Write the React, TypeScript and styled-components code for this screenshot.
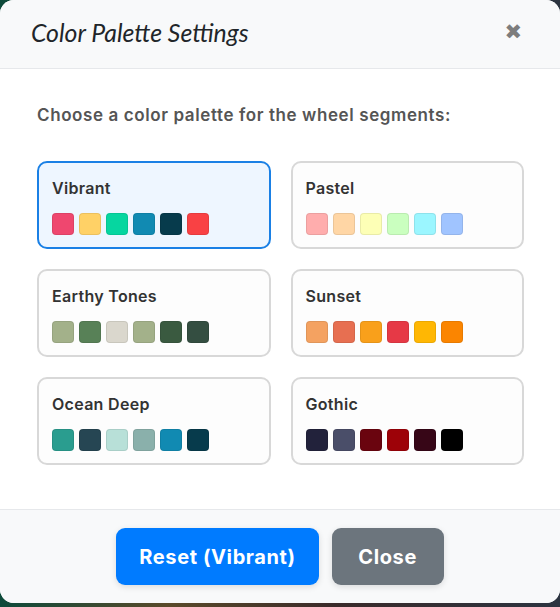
import React, { useState } from 'react';
import styled, { createGlobalStyle } from 'styled-components';

const GlobalStyle = createGlobalStyle`
  html, body {
    margin: 0;
    padding: 0;
    background: #20302c;
  }
  * {
    box-sizing: border-box;
  }
`;

const Page = styled.div`
  width: 560px;
  height: 607px;
  overflow: hidden;
  background: linear-gradient(90deg, #0d4a3a 0%, #5a4a2a 30%, #3a2a2a 60%, #2c3440 100%);
`;

const Modal = styled.div`
  width: 560px;
  height: 603px;
  background: #fff;
  border-radius: 14px;
  overflow: hidden;
  display: flex;
  flex-direction: column;
  font-family: Inter, 'Noto Sans', sans-serif;
`;

const Header = styled.div`
  height: 69px;
  flex-shrink: 0;
  background: #f8f9fa;
  border-bottom: 1px solid #e6e8eb;
  display: flex;
  align-items: center;
  justify-content: space-between;
  padding: 0 38px 4px 31px;
`;

const Title = styled.h2`
  margin: 0;
  font-family: Lato, 'Open Sans', sans-serif;
  font-style: italic;
  font-weight: 400;
  font-size: 24.8px;
  color: #212529;
`;

const CloseX = styled.button`
  border: none;
  background: none;
  padding: 0;
  font-family: 'DejaVu Sans', sans-serif;
  font-size: 21px;
  font-weight: 700;
  color: #7d7d7d;
  cursor: pointer;
  line-height: 1;
`;

const Body = styled.div`
  flex: 1;
  padding: 34px 36px 0 37px;
`;

const Intro = styled.p`
  margin: 0 0 34px;
  font-size: 17px;
  font-weight: 600;
  letter-spacing: 0.6px;
  color: #555;
  line-height: 24px;
`;

const Grid = styled.div`
  display: grid;
  grid-template-columns: 1fr 1fr;
  column-gap: 20px;
  row-gap: 20px;
`;

const Card = styled.div<{ $active?: boolean }>`
  height: 88px;
  border: 2px solid ${(p) => (p.$active ? '#1a80e5' : '#d8d8d8')};
  background: ${(p) => (p.$active ? '#eef6ff' : '#fdfdfd')};
  border-radius: 10px;
  padding: 14px 14px 0 13px;
  cursor: pointer;
`;

const CardName = styled.div`
  font-size: 16px;
  font-weight: 600;
  letter-spacing: 0.3px;
  color: #333;
  line-height: 22px;
  margin-bottom: 14px;
`;

const Swatches = styled.div`
  display: flex;
  gap: 5px;
`;

const Swatch = styled.span<{ $color: string }>`
  width: 22px;
  height: 22px;
  border-radius: 4px;
  background: ${(p) => p.$color};
  border: 1px solid rgba(0, 0, 0, 0.08);
`;

const Footer = styled.div`
  height: 94px;
  flex-shrink: 0;
  background: #f8f9fa;
  border-top: 1px solid #e6e8eb;
  display: flex;
  align-items: center;
  justify-content: center;
  gap: 13px;
`;

const Button = styled.button<{ $variant: 'primary' | 'secondary' }>`
  height: 57px;
  min-width: 112px;
  padding: 0 23px;
  border: none;
  border-radius: 9px;
  font-family: Inter, 'Noto Sans', sans-serif;
  font-size: 20px;
  font-weight: 700;
  letter-spacing: 0.6px;
  color: #fff;
  background: ${(p) => (p.$variant === 'primary' ? '#007bff' : '#6c757d')};
  box-shadow: 0 2px 6px rgba(0, 0, 0, 0.12);
  cursor: pointer;
`;

const palettes = [
  { name: 'Vibrant', colors: ['#ef476f', '#ffd166', '#06d6a0', '#118ab2', '#073b4c', '#f94144'] },
  { name: 'Pastel', colors: ['#ffadad', '#ffd6a5', '#fdffb6', '#caffbf', '#9bf6ff', '#a0c4ff'] },
  { name: 'Earthy Tones', colors: ['#a3b18a', '#588157', '#dad7cd', '#a3b18a', '#3a5a40', '#344e41'] },
  { name: 'Sunset', colors: ['#f4a261', '#e76f51', '#f9a01b', '#e63946', '#ffb703', '#fb8500'] },
  { name: 'Ocean Deep', colors: ['#2a9d8f', '#264653', '#b8e0d8', '#8ab0ab', '#118ab2', '#073b4c'] },
  { name: 'Gothic', colors: ['#22223b', '#4a4e69', '#6a040f', '#9d0208', '#370617', '#000000'] },
];

export default function App() {
  const [selected, setSelected] = useState('Vibrant');

  return (
    <>
      <GlobalStyle />
      <Page>
        <Modal>
          <Header>
            <Title>Color Palette Settings</Title>
            <CloseX aria-label="Close">✖</CloseX>
          </Header>
          <Body>
            <Intro>Choose a color palette for the wheel segments:</Intro>
            <Grid>
              {palettes.map((p) => (
                <Card key={p.name} $active={p.name === selected} onClick={() => setSelected(p.name)}>
                  <CardName>{p.name}</CardName>
                  <Swatches>
                    {p.colors.map((c, i) => (
                      <Swatch key={i} $color={c} />
                    ))}
                  </Swatches>
                </Card>
              ))}
            </Grid>
          </Body>
          <Footer>
            <Button $variant="primary" onClick={() => setSelected('Vibrant')}>Reset (Vibrant)</Button>
            <Button $variant="secondary">Close</Button>
          </Footer>
        </Modal>
      </Page>
    </>
  );
}
